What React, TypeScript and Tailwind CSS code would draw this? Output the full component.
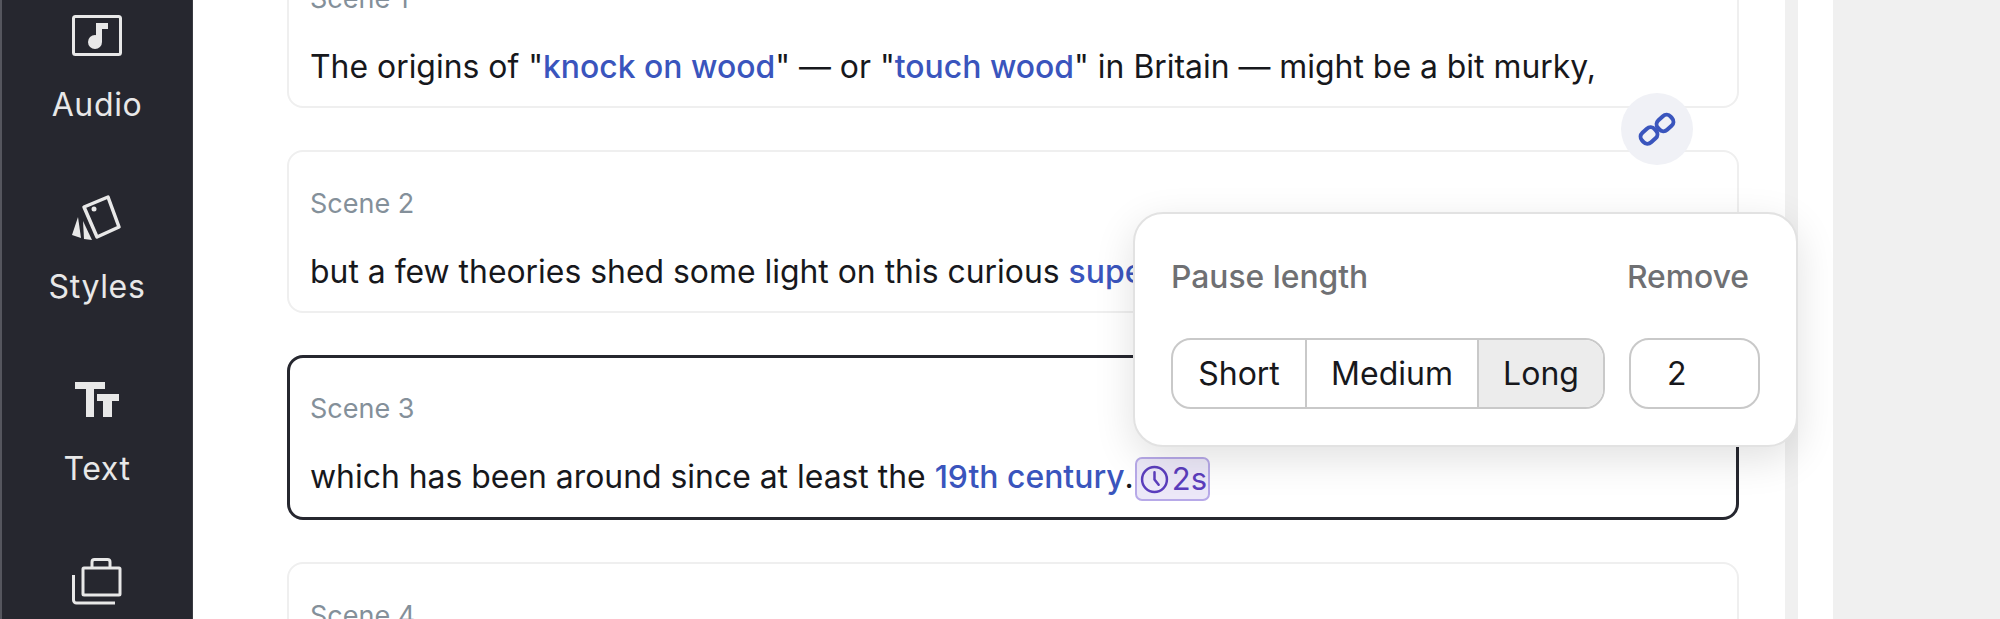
const FONT = "font-['Inter','Liberation_Sans',sans-serif]";

function AudioIcon() {
  return (
    <svg width="50" height="41" viewBox="0 0 50 41" fill="none">
      <rect x="1.5" y="1.5" width="47" height="38" rx="2" stroke="#e8e8e8" strokeWidth="3" />
      <path d="M24 27V8h12v6h-6v13z" fill="#e8e8e8" />
      <circle cx="23" cy="27" r="7" fill="#e8e8e8" />
    </svg>
  );
}

function StylesIcon() {
  return (
    <svg width="50" height="47" viewBox="0 0 50 47" fill="none">
      <path d="M12 13L36 3L47 33L25 43z" stroke="#e8e8e8" strokeWidth="3.5" strokeLinejoin="round" />
      <circle cx="22" cy="15" r="2.5" fill="#e8e8e8" />
      <path d="M0 41L6 23L9 44z" fill="#e8e8e8" />
      <path d="M11 27L20 46L12 45z" fill="#e8e8e8" />
    </svg>
  );
}

function TextIcon() {
  return (
    <svg width="44" height="35" viewBox="0 0 44 35" fill="#e8e8e8">
      <path d="M0 0h30v7H19v28h-8V7H0z" />
      <path d="M22 12h22v7h-7v16h-9V19h-6z" />
    </svg>
  );
}

function BriefcaseIcon() {
  return (
    <svg width="50" height="47" viewBox="0 0 50 47" fill="none" stroke="#e8e8e8" strokeWidth="3">
      <rect x="11" y="10" width="37" height="27" rx="1" />
      <path d="M20 10V4a2.500 2.500 0 0 1 2.500-2.500h13A2.500 2.500 0 0 1 38 4v6" />
      <path d="M1.500 17v25a3 3 0 0 0 3 3H43" />
    </svg>
  );
}

function NavItem({ icon, label }: { icon: React.ReactNode; label?: string }) {
  return (
    <div className="flex flex-col items-center">
      <div className="h-[47px] flex items-center justify-center">{icon}</div>
      {label && (
        <span className="mt-[28px] text-[32px] leading-[36px] tracking-[0.02em] text-[#e8e8e8]">{label}</span>
      )}
    </div>
  );
}

function Link({ children }: { children: React.ReactNode }) {
  return <span className="text-[#3a55bd] font-medium">{children}</span>;
}

function SceneCard({
  label,
  selected,
  className,
  children,
}: {
  label: string;
  selected?: boolean;
  className: string;
  children?: React.ReactNode;
}) {
  return (
    <div
      className={`w-[1452px] rounded-[16px] bg-white shrink-0 ${className} ${
        selected
          ? "border-[3px] border-[#26272f] pl-[20px] pt-[35px]"
          : "border-[2px] border-[#efefef] pl-[21px] pt-[36px]"
      }`}
    >
      <div className="text-[27px] leading-[32px] text-[#84909a]">{label}</div>
      <div className="mt-[30px] text-[31.9px] leading-[44px] text-[#17181c] whitespace-nowrap">{children}</div>
    </div>
  );
}

export default function App() {
  return (
    <div className={`h-[619px] w-[2000px] overflow-hidden flex bg-[#f0f0f0] ${FONT}`}>
      {/* Left rail */}
      <div className="w-[2px] bg-[#55565e] shrink-0" />
      <div className="w-[191px] shrink-0 bg-[#26272f] border-r border-[#3a3b42] overflow-hidden flex flex-col items-center pt-[12px]">
        <div className="flex flex-col items-center gap-[71px]">
          <NavItem icon={<AudioIcon />} label="Audio" />
          <NavItem icon={<StylesIcon />} label="Styles" />
          <NavItem icon={<TextIcon />} label="Text" />
          <NavItem icon={<BriefcaseIcon />} />
        </div>
      </div>

      {/* Scene list */}
      <div className="relative w-[1640px] shrink-0 bg-white h-full overflow-hidden pl-[94px] flex flex-col">
        <div className="mt-[-55px] flex flex-col gap-[42px]">
          <SceneCard label="Scene 1" className="h-[163px]">
            The origins of "<Link>knock on wood</Link>" — or "<Link>touch wood</Link>" in Britain — might be a bit murky,
          </SceneCard>
          <SceneCard label="Scene 2" className="h-[163px]">
            but a few theories shed some light on this curious <Link>superstition</Link>
          </SceneCard>
          <SceneCard label="Scene 3" selected className="h-[165px]">
            which has been around since at least the <Link>19th century</Link>.
            <span className="inline-flex items-center align-middle -my-[6px] ml-[1px] h-[44px] w-[75px] pl-[3px] gap-[3px] rounded-[7px] border-[2px] border-[#b7a9e8] bg-[#ece8f8] text-[#5b3dbd] text-[31px] leading-[40px]">
              <svg width="29" height="29" viewBox="0 0 28 28" fill="none" stroke="#5b3dbd" strokeWidth="2.4">
                <circle cx="14" cy="14" r="12" />
                <path d="M14 7v7l4 5" strokeLinecap="round" />
              </svg>
              2s
            </span>
          </SceneCard>
          <SceneCard label="Scene 4" className="h-[163px]" />
        </div>

        <div className="absolute left-[1592px] top-0 w-[13px] h-full bg-[#f0f0f0]" />

        {/* Link badge */}
        <div className="absolute left-[1428px] top-[93px] w-[72px] h-[72px] rounded-full bg-[#f0f1f6] flex items-center justify-center">
          <svg width="40" height="40" viewBox="0 0 40 40" fill="none" stroke="#3a55bd" strokeWidth="4">
            <rect x="3.500" y="20" width="17" height="13" rx="5.500" transform="rotate(-42 12 26.500)" />
            <rect x="19.500" y="7.500" width="17" height="13" rx="5.500" transform="rotate(-42 28 14)" />
          </svg>
        </div>

        {/* Pause popover */}
        <div className="absolute left-[940px] top-[212px] w-[665px] h-[235px] rounded-[30px] border-[2px] border-[#e2e2e2] bg-white shadow-[0_12px_40px_rgba(0,0,0,0.12)] pl-[37px] pr-[36px] pt-[43px]">
          <div className="flex justify-between items-center pr-[11px] -ml-[1px] text-[31.8px] leading-[40px] text-[#6f7073] font-medium">
            <span>Pause length</span>
            <span>Remove</span>
          </div>
          <div className="mt-[41px] flex gap-[24px] -ml-[1px]">
            <div className="flex h-[71px] w-[434px] rounded-[20px] border-[2px] border-[#c9c9c9] overflow-hidden text-[32px] text-[#17181c]">
              <div className="w-[134px] flex items-center justify-center border-r-[2px] border-[#c9c9c9]">Short</div>
              <div className="w-[172px] flex items-center justify-center border-r-[2px] border-[#c9c9c9]">Medium</div>
              <div className="flex-1 flex items-center justify-center bg-[#ececec]">Long</div>
            </div>
            <div className="h-[71px] w-[131px] rounded-[20px] border-[2px] border-[#c9c9c9] flex items-center pl-[36px] text-[32px] text-[#17181c]">2</div>
          </div>
        </div>
      </div>
    </div>
  );
}
